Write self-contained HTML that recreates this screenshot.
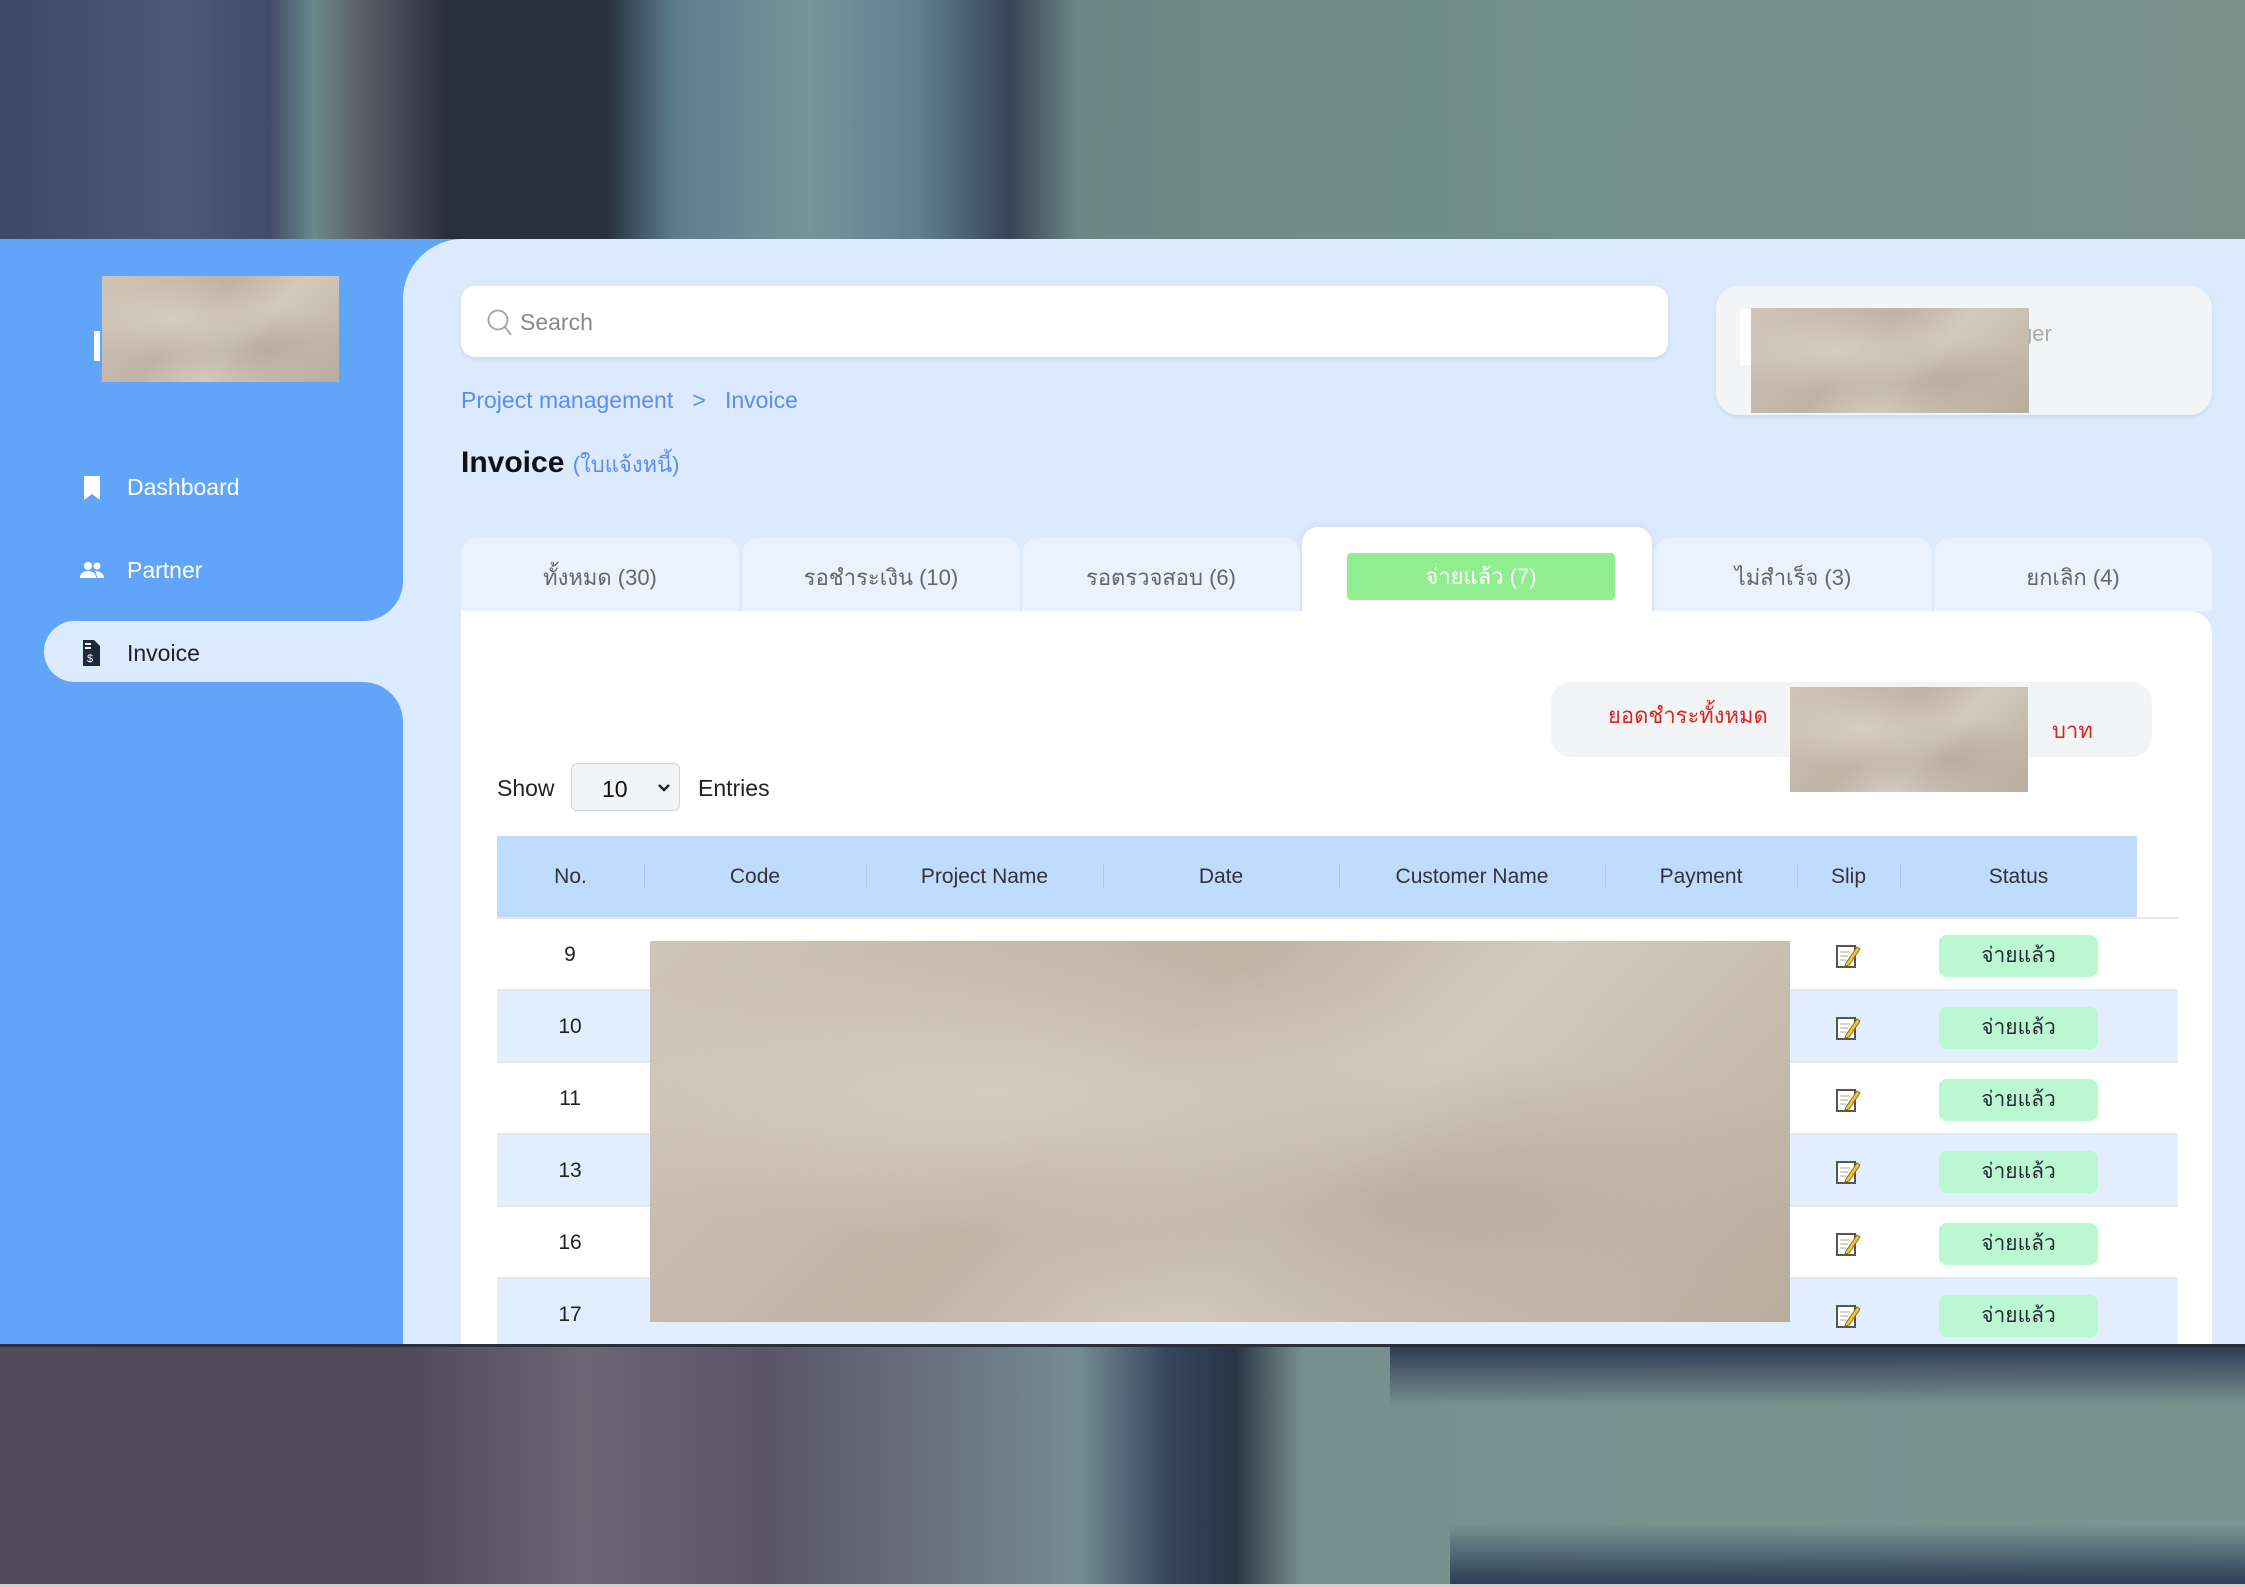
<!DOCTYPE html>
<html><head><meta charset="utf-8"><style>
*{margin:0;padding:0;box-sizing:border-box}
body{width:2245px;height:1587px;overflow:hidden;position:relative;font-family:"Liberation Sans","Noto Sans CJK SC",sans-serif;background:#c8c8c8}
.abs{position:absolute}
.paper{background:radial-gradient(ellipse at 30% 40%,#d6cdc1 0%,transparent 45%),radial-gradient(ellipse at 70% 70%,#b9ae9f 0%,transparent 40%),linear-gradient(135deg,#cfc5b8,#bfb3a4 40%,#d3cabe 60%,#b8ac9c);}
.th{position:absolute;top:0;height:81px;line-height:81px;font-size:21px;color:#333;text-align:center}
.sep{position:absolute;top:28px;width:1px;height:24px;background:#a9c6ef}
.row{position:absolute;left:497px;width:1681px;height:72px;border-bottom:2px solid #e3e8ef}
.no{position:absolute;left:0;width:146px;text-align:center;line-height:72px;font-size:21px;color:#222}
.badge{position:absolute;left:1442px;top:16px;width:159px;height:42px;border-radius:8px;background:#bbf7d0;text-align:center;line-height:42px;font-size:21px;color:#1f2937}
.slip{position:absolute;left:1339px;top:24px}
.tab{position:absolute;top:299px;height:73px;background:#eaf2fe;border-radius:16px 16px 0 0;text-align:center;line-height:80px;font-size:22px;color:#666}
</style></head><body>
<div class="abs" style="left:0;top:0;width:2245px;height:239px;background:linear-gradient(90deg,#3e4866 0%,#4d5877 8%,#434a6a 12%,#6a8a8a 14%,#5f5f6a 16%,#272e3c 20%,#28303e 27%,#5b7d8d 30%,#73969a 36%,#5f7f90 41%,#384457 45%,#6c8783 48%,#72918a 70%,#7a918a 100%)"></div>
<div class="abs" style="left:0;top:1346px;width:2245px;height:241px;background:linear-gradient(90deg,#524c5c 0%,#4f4a5a 18%,#6a6674 26%,#5a5568 34%,#6a7280 42%,#758c92 48%,#36465e 52%,#2b3444 55%,#77908e 58%,#7a948f 100%)"></div>
<div class="abs" style="left:1390px;top:1346px;width:855px;height:60px;background:linear-gradient(180deg,#2e3a52,rgba(46,58,82,0))"></div>
<div class="abs" style="left:1450px;top:1525px;width:795px;height:60px;background:linear-gradient(180deg,rgba(40,55,80,0),#2b3c58)"></div>
<div class="abs" style="left:0;top:1584px;width:2245px;height:3px;background:#cfcfcf"></div>

<div class="abs" style="left:0;top:239px;width:2245px;height:1107px;background:#dbeafe;overflow:hidden">
 <div class="abs" style="left:0;top:370px;width:120px;height:90px;background:#61a5fa"></div>
 <div class="abs" style="left:0;top:0;width:403px;height:382px;background:#61a5fa;border-radius:0 0 40px 0"></div>
 <div class="abs" style="left:0;top:443px;width:403px;height:664px;background:#61a5fa;border-radius:0 40px 0 0"></div>
 <div class="abs" style="left:44px;top:382px;width:360px;height:61px;background:#dbeafe;border-radius:31px 0 0 31px"></div>
 <div class="abs" style="left:403px;top:0;width:100px;height:100px;background:#61a5fa"></div>
 <div class="abs" style="left:403px;top:0;width:1842px;height:1107px;background:#dbeafe;border-radius:60px 0 0 0"></div>
 <div class="abs" style="left:94px;top:92px;width:6px;height:30px;background:#fff"></div>
 <div class="abs paper" style="left:102px;top:37px;width:237px;height:106px"></div>
 <svg class="abs" style="left:82px;top:236px" width="20" height="26" viewBox="0 0 20 26"><path d="M2 1h16v24l-8-6-8 6z" fill="#fff"/></svg>
 <div class="abs" style="left:127px;top:235px;font-size:23px;color:#fff">Dashboard</div>
 <svg class="abs" style="left:80px;top:322px" width="24" height="18" viewBox="0 0 24 18"><circle cx="8" cy="5" r="4" fill="#fff"/><circle cx="17" cy="5" r="3.5" fill="#fff"/><path d="M0 17c0-5 4-7 8-7s8 2 8 7z M15 10c4 0 9 2 9 7h-7c0-3-1-5-2-7z" fill="#fff"/></svg>
 <div class="abs" style="left:127px;top:318px;font-size:23px;color:#fff">Partner</div>
 <svg class="abs" style="left:82px;top:401px" width="18" height="26" viewBox="0 0 18 26"><path d="M1 0h11l6 6v20H1z" fill="#1f2937"/><text x="5" y="22" font-size="11" fill="#fff" font-family="Liberation Sans">$</text><rect x="3" y="3" width="6" height="2" fill="#fff"/><rect x="3" y="7" width="6" height="2" fill="#fff"/></svg>
 <div class="abs" style="left:127px;top:401px;font-size:23px;color:#222">Invoice</div>

 <div class="abs" style="left:461px;top:47px;width:1207px;height:71px;background:#fff;border-radius:14px;box-shadow:0 2px 4px rgba(0,0,0,.08)"></div>
 <svg class="abs" style="left:487px;top:70px" width="26" height="28" viewBox="0 0 26 28"><circle cx="11" cy="11" r="9.5" fill="none" stroke="#aaa" stroke-width="2"/><path d="M18 18l6 8" stroke="#aaa" stroke-width="2"/></svg>
 <div class="abs" style="left:520px;top:70px;font-size:23px;color:#888">Search</div>
 <div class="abs" style="left:1716px;top:47px;width:496px;height:129px;background:#f3f4f6;border-radius:22px;box-shadow:0 2px 4px rgba(0,0,0,.08)"></div>
 <div class="abs" style="left:1740px;top:70px;width:14px;height:56px;background:#fff"></div>
 <div class="abs" style="left:2020px;top:82px;font-size:22px;color:#aaa">ger</div>
 <div class="abs paper" style="left:1751px;top:69px;width:278px;height:105px"></div>
 <div class="abs" style="left:461px;top:148px;font-size:23px;color:#5b8df0">Project management&nbsp;&nbsp;&nbsp;&gt;&nbsp;&nbsp;&nbsp;Invoice</div>
 <div class="abs" style="left:461px;top:207px;font-size:30px;font-weight:bold;color:#111">Invoice <span style="font-size:22px;font-weight:normal;color:#5b8df0">(ใบแจ้งหนี้)</span></div>

 <div class="tab" style="left:461px;width:278px">ทั้งหมด (30)</div>
 <div class="tab" style="left:742px;width:278px">รอชำระเงิน (10)</div>
 <div class="tab" style="left:1022px;width:278px">รอตรวจสอบ (6)</div>
 <div class="tab" style="left:1654px;width:278px">ไม่สำเร็จ (3)</div>
 <div class="tab" style="left:1934px;width:278px">ยกเลิก (4)</div>
 <div class="abs" style="left:461px;top:372px;width:1751px;height:760px;background:#fff;border-radius:0 22px 0 0"></div>
 <div class="abs" style="left:1302px;top:288px;width:350px;height:90px;background:#fff;border-radius:16px 16px 0 0;box-shadow:0 -2px 8px rgba(0,0,0,.06)"></div>
 <div class="abs" style="left:1347px;top:314px;width:268px;height:47px;background:#90ee90;border-radius:4px;text-align:center;line-height:47px;font-size:22px;color:#fff">จ่ายแล้ว (7)</div>

 <div class="abs" style="left:1551px;top:443px;width:601px;height:75px;background:#f3f4f6;border-radius:20px"></div>
 <div class="abs" style="left:1608px;top:459px;font-size:22px;color:#dc2626">ยอดชำระทั้งหมด</div>
 <div class="abs" style="left:2052px;top:474px;font-size:22px;color:#dc2626">บาท</div>
 <div class="abs paper" style="left:1790px;top:448px;width:238px;height:105px"></div>

 <div class="abs" style="left:497px;top:536px;font-size:23px;color:#222">Show</div>
 <div class="abs" style="left:571px;top:524px;width:109px;height:48px;background:#f3f4f6;border:1px solid #d1d5db;border-radius:6px"></div>
 <div class="abs" style="left:602px;top:537px;font-size:23px;color:#111">10</div>
 <svg class="abs" style="left:657px;top:544px" width="14" height="10" viewBox="0 0 14 10"><path d="M2 2l5 5 5-5" stroke="#222" stroke-width="2.5" fill="none"/></svg>
 <div class="abs" style="left:698px;top:536px;font-size:23px;color:#222">Entries</div>

 <div class="abs" style="left:497px;top:597px;width:1640px;height:81px;background:#bfdbfe">
  <div class="th" style="left:0;width:147px">No.</div>
  <div class="th" style="left:147px;width:222px">Code</div>
  <div class="th" style="left:369px;width:237px">Project Name</div>
  <div class="th" style="left:606px;width:236px">Date</div>
  <div class="th" style="left:842px;width:266px">Customer Name</div>
  <div class="th" style="left:1108px;width:192px">Payment</div>
  <div class="th" style="left:1300px;width:103px">Slip</div>
  <div class="th" style="left:1403px;width:237px">Status</div>
  <div class="sep" style="left:147px"></div><div class="sep" style="left:369px"></div><div class="sep" style="left:606px"></div><div class="sep" style="left:842px"></div><div class="sep" style="left:1108px"></div><div class="sep" style="left:1300px"></div><div class="sep" style="left:1403px"></div>
 </div>
 <div class="abs" style="left:497px;top:678px;width:1681px;height:2px;background:#e5e7eb"></div>
</div>

<div class="row" style="top:919px;background:#fff"><div class="no">9</div><svg class="slip" width="26" height="26" viewBox="0 0 26 26"><rect x="1" y="3" width="18" height="21" fill="#fff" stroke="#555" stroke-width="2"/><path d="M4 9h10M4 13h8M4 17h6" stroke="#aaa"/><path d="M10 20l11-16 3 2-11 16-4 1z" fill="#f5c542" stroke="#8a6d1a"/></svg><div class="badge">จ่ายแล้ว</div></div>
<div class="row" style="top:991px;background:#e2eefe"><div class="no">10</div><svg class="slip" width="26" height="26" viewBox="0 0 26 26"><rect x="1" y="3" width="18" height="21" fill="#fff" stroke="#555" stroke-width="2"/><path d="M4 9h10M4 13h8M4 17h6" stroke="#aaa"/><path d="M10 20l11-16 3 2-11 16-4 1z" fill="#f5c542" stroke="#8a6d1a"/></svg><div class="badge">จ่ายแล้ว</div></div>
<div class="row" style="top:1063px;background:#fff"><div class="no">11</div><svg class="slip" width="26" height="26" viewBox="0 0 26 26"><rect x="1" y="3" width="18" height="21" fill="#fff" stroke="#555" stroke-width="2"/><path d="M4 9h10M4 13h8M4 17h6" stroke="#aaa"/><path d="M10 20l11-16 3 2-11 16-4 1z" fill="#f5c542" stroke="#8a6d1a"/></svg><div class="badge">จ่ายแล้ว</div></div>
<div class="row" style="top:1135px;background:#e2eefe"><div class="no">13</div><svg class="slip" width="26" height="26" viewBox="0 0 26 26"><rect x="1" y="3" width="18" height="21" fill="#fff" stroke="#555" stroke-width="2"/><path d="M4 9h10M4 13h8M4 17h6" stroke="#aaa"/><path d="M10 20l11-16 3 2-11 16-4 1z" fill="#f5c542" stroke="#8a6d1a"/></svg><div class="badge">จ่ายแล้ว</div></div>
<div class="row" style="top:1207px;background:#fff"><div class="no">16</div><svg class="slip" width="26" height="26" viewBox="0 0 26 26"><rect x="1" y="3" width="18" height="21" fill="#fff" stroke="#555" stroke-width="2"/><path d="M4 9h10M4 13h8M4 17h6" stroke="#aaa"/><path d="M10 20l11-16 3 2-11 16-4 1z" fill="#f5c542" stroke="#8a6d1a"/></svg><div class="badge">จ่ายแล้ว</div></div>
<div class="row" style="top:1279px;height:67px;border:none;background:#e2eefe"><div class="no">17</div><svg class="slip" width="26" height="26" viewBox="0 0 26 26"><rect x="1" y="3" width="18" height="21" fill="#fff" stroke="#555" stroke-width="2"/><path d="M4 9h10M4 13h8M4 17h6" stroke="#aaa"/><path d="M10 20l11-16 3 2-11 16-4 1z" fill="#f5c542" stroke="#8a6d1a"/></svg><div class="badge">จ่ายแล้ว</div></div>
<div class="abs paper" style="left:650px;top:941px;width:1140px;height:381px"></div>
<div class="abs" style="left:0;top:1344px;width:2245px;height:3px;background:#2a2f38"></div>
</body></html>
